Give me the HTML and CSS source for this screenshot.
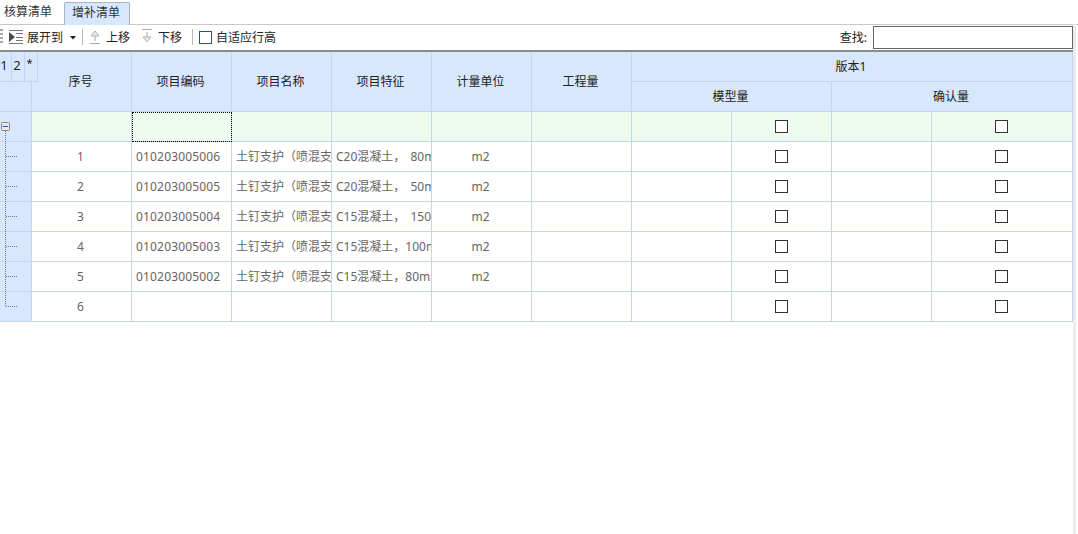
FILE: index.html
```html
<!DOCTYPE html>
<html lang="zh-CN">
<head>
<meta charset="utf-8">
<title>增补清单</title>
<link rel="stylesheet" href="styles.css">
</head>
<body>
<div class="page">
  <div class="tabs">
    <div class="tab">核算清单</div>
    <div class="tab active">增补清单</div>
  </div>
  <div class="toolbar">
    <span class="grip"></span>
    <svg class="ico-expand" width="16" height="16" viewBox="0 0 16 16"><path d="M0 3V13L6 8Z" fill="#4a4a4a"/><path d="M0 1.5H14M7 4.5H14M7 8.5H14M7 11.5H14M0 14.5H14" stroke="#777" fill="none"/></svg>
    <span class="tool-text expand-text">展开到</span>
    <svg class="caret" width="6" height="4" viewBox="0 0 6 4"><path d="M0 0H6L3 3.5Z" fill="#222"/></svg>
    <span class="sep sep-a"></span>
    <svg class="ico-move" width="12" height="16" viewBox="0 0 12 16"><path d="M6 2L2 7H10Z" fill="#ececec" stroke="#b0b0b0"/><path d="M6 7V12M1 14.5H11" stroke="#a8a8a8" fill="none"/></svg>
    <span class="tool-text up-text">上移</span>
    <svg class="ico-move" width="12" height="16" viewBox="0 0 12 16"><path d="M6 13L2 8H10Z" fill="#ececec" stroke="#b0b0b0"/><path d="M6 8V3M1 0.5H11" stroke="#a8a8a8" fill="none"/></svg>
    <span class="tool-text">下移</span>
    <span class="sep sep-b"></span>
    <span class="tool-check"></span>
    <span class="tool-text">自适应行高</span>
    <span class="find-label">查找:</span>
    <input class="find-input" type="text">
  </div>
  <div class="sheet">
    <div class="levels"><span>1</span><span>2</span><span class="star">*</span></div>
    <svg class="tree" width="31" height="210" viewBox="0 0 31 210">
      <path d="M5.5 19V194.5M6 44.5H18M6 74.5H18M6 104.5H18M6 134.5H18M6 164.5H18M6 194.5H18" stroke="#777" stroke-dasharray="1 1" fill="none"/>
      <rect x="1.5" y="10.5" width="8" height="8" rx="1" fill="#e8e8e8" stroke="#888"/>
      <path d="M3 14.5H8" stroke="#2b4fa8"/>
    </svg>
    <div class="grid">
      <div class="c h gutter-head"></div>
      <div class="c h span2">序号</div>
      <div class="c h span2">项目编码</div>
      <div class="c h span2">项目名称</div>
      <div class="c h span2">项目特征</div>
      <div class="c h span2">计量单位</div>
      <div class="c h span2">工程量</div>
      <div class="c h span4">版本1</div>
      <div class="c h span-two">模型量</div>
      <div class="c h span-two">确认量</div>

      <div class="c g"></div><div class="c new"></div><div class="c new focus"></div><div class="c new"></div><div class="c new"></div><div class="c new"></div><div class="c new"></div><div class="c new"></div><div class="c new m"><span class="box"></span></div><div class="c new"></div><div class="c new m end"><span class="box"></span></div>

      <div class="c g"></div><div class="c m num">1</div><div class="c t code">010203005006</div><div class="c t">土钉支护（喷混支护）</div><div class="c t spec">C20混凝土， 80mm</div><div class="c m num">m2</div><div class="c"></div><div class="c"></div><div class="c m"><span class="box"></span></div><div class="c"></div><div class="c m end"><span class="box"></span></div>

      <div class="c g"></div><div class="c m num">2</div><div class="c t code">010203005005</div><div class="c t">土钉支护（喷混支护）</div><div class="c t spec">C20混凝土， 50mm</div><div class="c m num">m2</div><div class="c"></div><div class="c"></div><div class="c m"><span class="box"></span></div><div class="c"></div><div class="c m end"><span class="box"></span></div>

      <div class="c g"></div><div class="c m num">3</div><div class="c t code">010203005004</div><div class="c t">土钉支护（喷混支护）</div><div class="c t spec">C15混凝土， 150mm</div><div class="c m num">m2</div><div class="c"></div><div class="c"></div><div class="c m"><span class="box"></span></div><div class="c"></div><div class="c m end"><span class="box"></span></div>

      <div class="c g"></div><div class="c m num">4</div><div class="c t code">010203005003</div><div class="c t">土钉支护（喷混支护）</div><div class="c t">C15混凝土，100mm</div><div class="c m num">m2</div><div class="c"></div><div class="c"></div><div class="c m"><span class="box"></span></div><div class="c"></div><div class="c m end"><span class="box"></span></div>

      <div class="c g"></div><div class="c m num">5</div><div class="c t code">010203005002</div><div class="c t">土钉支护（喷混支护）</div><div class="c t">C15混凝土，80mm</div><div class="c m num">m2</div><div class="c"></div><div class="c"></div><div class="c m"><span class="box"></span></div><div class="c"></div><div class="c m end"><span class="box"></span></div>

      <div class="c g"></div><div class="c m num">6</div><div class="c t"></div><div class="c t"></div><div class="c t"></div><div class="c m"></div><div class="c"></div><div class="c"></div><div class="c m"><span class="box"></span></div><div class="c"></div><div class="c m end"><span class="box"></span></div>
    </div>
  </div>
</div>
</body>
</html>
```

FILE: styles.css
```css
* { box-sizing: border-box; }
html, body { margin: 0; padding: 0; background: #fff; }
body { overflow: hidden; font-family: "Noto Sans", "Noto Sans CJK SC", sans-serif; font-size: 12px; color: #222; }
.page { width: 1078px; height: 534px; position: relative; }
.page::after { content: ""; position: absolute; left: 1073px; top: 24px; bottom: 0; width: 3px; background: #ececec; }

.tabs { height: 25px; padding: 2px 0 0 0; display: flex; border-bottom: 1px solid #c8c8c8; }
.tab { width: 64px; padding: 0 0 0 4px; line-height: 20px; color: #333; }
.tab.active { width: 66px; padding: 0 2px 0 0; margin-bottom: -1px; text-align: center; background: #d8e8fc; border: 1px solid #aab4c0; border-bottom: 0; border-radius: 2px 2px 0 0; }

.toolbar { height: 26px; padding-bottom: 2px; display: flex; align-items: center; color: #222; }
.grip { width: 3px; height: 16px; margin-right: 6px; background: repeating-linear-gradient(#aaa 0 2px, transparent 2px 4px); }
.ico-expand { margin-right: 2px; }
.caret { margin: 1px 0 0 7px; }
.sep { width: 1px; height: 16px; background: #b8b8b8; }
.sep-a { margin: 0 6px; }
.sep-b { margin: 0 6px 0 10px; }
.ico-move { margin-right: 5px; }
.up-text { margin-right: 11px; }
.tool-check { width: 13px; height: 13px; border: 1px solid #17599c; margin-right: 4px; }
.find-label { margin-left: auto; margin-right: 6px; }
.find-input { width: 200px; height: 23px; margin: 1px 5px 0 0; align-self: flex-start; border: 1px solid #666; background: #fff; padding: 0; }

.sheet { position: relative; border-top: 2px solid #8a8a8a; width: 1073px; margin-top: -1px; }
.grid { display: grid; grid-template-columns: 32px repeat(9, 100px) 141px; grid-auto-rows: 30px; }
.c { border-right: 1px solid #c2d5f4; border-bottom: 1px solid #c2d5f4; color: #666; display: flex; align-items: center; overflow: hidden; white-space: nowrap; }
.h { background: #d8e8fc; color: #222; justify-content: center; padding: 0 2px 2px 0; }
.gutter-head { grid-row: span 2; }
.span2 { grid-row: span 2; }
.span4 { grid-column: span 4; }
.span-two { grid-column: span 2; }
.g { background: #d8e8fc; }
.new { background: #eefcf0; }
.m { justify-content: center; }
.num { padding-right: 2px; }
.end { padding-right: 1px; }
.t { padding: 0 1px 0 4px; display: block; line-height: 29px; }
.code { letter-spacing: 0.17px; }
.spec { word-spacing: 2px; }
.focus { outline: 1px dotted #000; outline-offset: -1px; }
.box { width: 13px; height: 13px; border: 1px solid #333; background: #fff; }

.levels { position: absolute; left: 0; top: 0; width: 38px; height: 30px; display: flex; z-index: 2; }
.levels span { width: 13px; height: 30px; line-height: 27px; font-size: 13px; text-align: center; color: #222; background: #d8e8fc; border-right: 1px solid #c2d5f4; border-bottom: 1px solid #c2d5f4; padding-right: 2px; }
.levels span:first-child { width: 12px; padding-right: 3px; }
.levels .star { font-size: 11px; line-height: 22px; padding-right: 3px; }
.tree { position: absolute; left: 0; top: 60px; z-index: 2; }
```
